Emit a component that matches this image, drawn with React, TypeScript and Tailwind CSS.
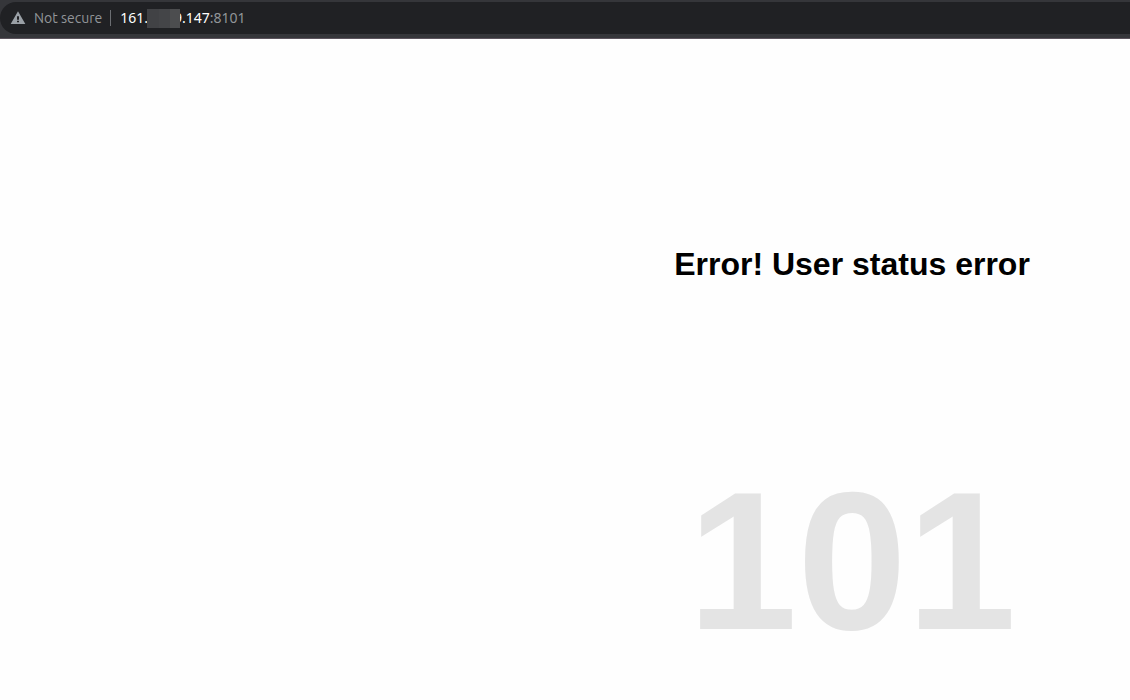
import React from "react";

function WarningIcon() {
  return (
    <svg width="16" height="16" viewBox="0 0 24 24" aria-hidden="true" className="shrink-0">
      <path
        d="M1 21h22L12 2 1 21zm12.5-2.5h-3v-2.5h3v2.5zm0-4h-3v-5h3v5z"
        fill="#9aa0a6"
      />
    </svg>
  );
}

function AddressBar() {
  return (
    <header className="border-b border-[#5b535c] bg-[#35363a] pt-0.5 pb-1">
      <div className="flex h-8 items-center rounded-l-full bg-[#202124] pl-2.5 font-['Noto_Sans',sans-serif] text-sm text-[#929599]">
        <WarningIcon />
        <span className="ml-2 font-[Ubuntu,'Noto_Sans',sans-serif]">Not secure</span>
        <span className="ml-2 h-4 w-px bg-[#6b6e72]" />
        <span className="relative ml-[9px] flex items-center whitespace-nowrap">
          <span className="text-white">161.</span>
          <span className="ml-[26px] text-white">9.147</span>
          <span>:8101</span>
          <span className="absolute left-[27px] flex h-[19px] w-[33px]">
            <span className="w-3 bg-[#414245]" />
            <span className="w-[11px] bg-[#444548]" />
            <span className="flex-1 bg-[#4c4d4f]" />
          </span>
        </span>
      </div>
    </header>
  );
}

export default function App() {
  return (
    <div className="min-h-screen bg-[#fefefe] font-['Liberation_Sans',Arial,sans-serif]">
      <AddressBar />
      <main className="pt-[206px] pl-[574px] text-center font-bold">
        <h1 className="text-[32px] leading-[38px] text-black">Error! User status error</h1>
        <p className="mt-[168px] text-[197px] leading-[220px] text-[#e4e4e4]">101</p>
      </main>
    </div>
  );
}
